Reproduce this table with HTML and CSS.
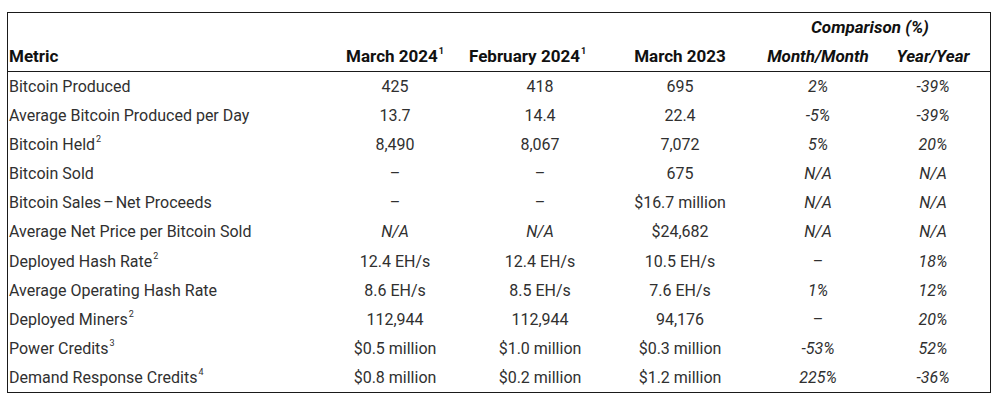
FILE: index.html
```html
<!DOCTYPE html>
<html>
<head>
<meta charset="utf-8">
<link rel="stylesheet" href="styles.css">
</head>
<body>
<div class="table">
  <div class="head">
    <div class="row top">
      <div></div><div></div><div></div><div></div>
      <div class="comp">Comparison (%)</div>
    </div>
    <div class="row labels">
      <div class="metric">Metric</div>
      <div class="c">March 2024<sup>1</sup></div>
      <div class="c feb">February 2024<sup>1</sup></div>
      <div class="c">March 2023</div>
      <div class="c i">Month/Month</div>
      <div class="c i">Year/Year</div>
    </div>
  </div>
  <div class="body">
    <div class="row"><div class="metric">Bitcoin Produced</div><div class="c">425</div><div class="c">418</div><div class="c">695</div><div class="c i">2%</div><div class="c i">-39%</div></div>
    <div class="row"><div class="metric">Average Bitcoin Produced per Day</div><div class="c">13.7</div><div class="c">14.4</div><div class="c">22.4</div><div class="c i">-5%</div><div class="c i">-39%</div></div>
    <div class="row"><div class="metric">Bitcoin Held<sup>2</sup></div><div class="c">8,490</div><div class="c">8,067</div><div class="c">7,072</div><div class="c i">5%</div><div class="c i">20%</div></div>
    <div class="row"><div class="metric">Bitcoin Sold</div><div class="c">–</div><div class="c">–</div><div class="c">675</div><div class="c i">N/A</div><div class="c i">N/A</div></div>
    <div class="row"><div class="metric">Bitcoin Sales<span class="ds">–</span>Net Proceeds</div><div class="c">–</div><div class="c">–</div><div class="c">$16.7 million</div><div class="c i">N/A</div><div class="c i">N/A</div></div>
    <div class="row"><div class="metric">Average Net Price per Bitcoin Sold</div><div class="c i">N/A</div><div class="c i">N/A</div><div class="c">$24,682</div><div class="c i">N/A</div><div class="c i">N/A</div></div>
    <div class="row"><div class="metric">Deployed Hash Rate<sup>2</sup></div><div class="c">12.4 EH/s</div><div class="c">12.4 EH/s</div><div class="c">10.5 EH/s</div><div class="c">–</div><div class="c i">18%</div></div>
    <div class="row"><div class="metric">Average Operating Hash Rate</div><div class="c">8.6 EH/s</div><div class="c">8.5 EH/s</div><div class="c">7.6 EH/s</div><div class="c i">1%</div><div class="c i">12%</div></div>
    <div class="row"><div class="metric">Deployed Miners<sup>2</sup></div><div class="c">112,944</div><div class="c">112,944</div><div class="c">94,176</div><div class="c">–</div><div class="c i">20%</div></div>
    <div class="row"><div class="metric">Power Credits<sup>3</sup></div><div class="c">$0.5 million</div><div class="c">$1.0 million</div><div class="c">$0.3 million</div><div class="c i">-53%</div><div class="c i">52%</div></div>
    <div class="row"><div class="metric">Demand Response Credits<sup>4</sup></div><div class="c">$0.8 million</div><div class="c">$0.2 million</div><div class="c">$1.2 million</div><div class="c i">225%</div><div class="c i">-36%</div></div>
  </div>
</div>
</body>
</html>
```
FILE: styles.css
```css
html, body {
  margin: 0;
  padding: 0;
  background: #ffffff;
}
body {
  font-family: Roboto, "Liberation Sans", sans-serif;
  font-size: 16px;
  color: #303030;
}
.table {
  margin: 12px 0 0 7px;
  width: 984px;
  border: 1px solid #1a1a1a;
  box-sizing: border-box;
}
.head {
  border-bottom: 1px solid #1a1a1a;
}
.row {
  display: grid;
  grid-template-columns: 313px 148px 142px 138px 138px 92px;
  align-items: center;
  height: 29.09px;
}
.head .row.top {
  height: 28px;
}
.head .row.labels {
  height: 30px;
  font-size: 17px;
  font-weight: 700;
  color: #111;
}
.comp {
  grid-column: 5 / span 2;
  text-align: center;
  font-size: 17px;
  font-weight: 700;
  font-style: italic;
  color: #111;
  padding-left: 12px;
}
.metric {
  padding-left: 1px;
  white-space: nowrap;
}
.ds {
  margin: 0 2px;
}
.c {
  text-align: center;
  white-space: nowrap;
}
.i {
  font-style: italic;
}
.feb {
  padding-right: 30px;
}
sup {
  font-size: 9px;
  line-height: 0;
  vertical-align: 0;
  position: relative;
  top: -8px;
  margin-left: 1px;
}
```
